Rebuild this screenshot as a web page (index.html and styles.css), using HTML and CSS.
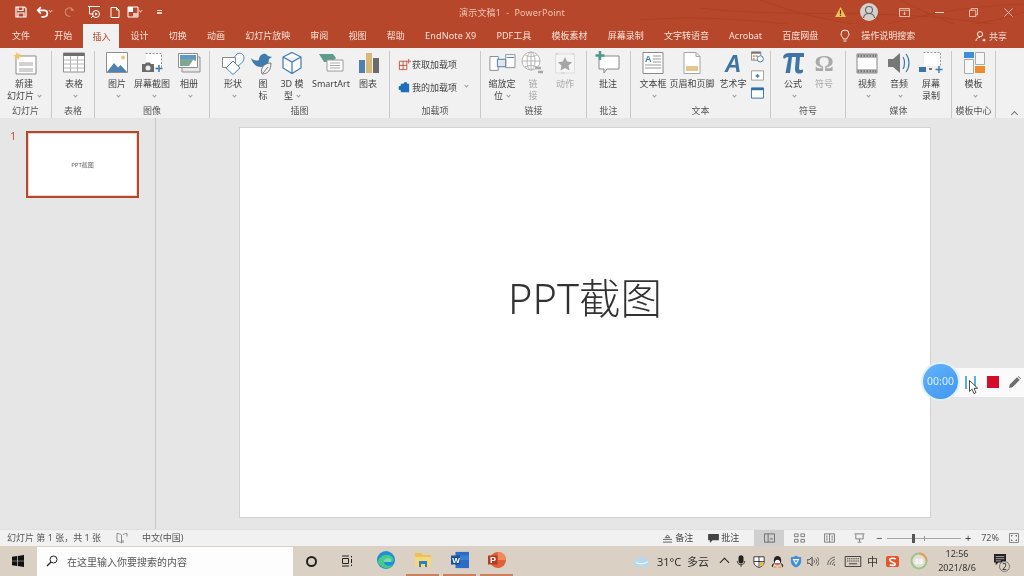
FILE: index.html
```html
<!DOCTYPE html>
<html lang="zh-CN">
<head>
<meta charset="utf-8">
<title>演示文稿1 - PowerPoint</title>
<link rel="stylesheet" href="styles.css">
</head>
<body>
<div class="app">
  <header class="titlebar">
    <svg class="swirl" viewBox="0 0 1024 48" aria-hidden="true"><path d="M700 8C800 20 900 4 1024 30M760 0C840 30 940 40 1024 12M820 48C880 20 960 6 1024 4M640 20C760 10 860 40 1000 48M900 0C940 20 990 40 1024 44"/></svg>
    <div class="qat">
      <svg class="q q-save" viewBox="0 0 12 12"><path d="M1 1h8.500L11 2.500V11H1z M3 1v3.500h5V1 M3 11V7h6v4" fill="none" stroke="#fff" stroke-width="1.200"/></svg>
      <svg class="q q-undo" viewBox="0 0 12 12"><path d="M4.500 1 1.500 4l3 3M2 4h5.500a3 3 0 0 1 0 6H5" fill="none" stroke="#fff" stroke-width="1.500"/></svg>
      <i class="chev light q-c1"></i>
      <svg class="q q-redo" viewBox="0 0 12 12"><path d="M8 1v3h3M10 4A4.500 4.500 0 1 0 7 10.500" fill="none" stroke="#d98c75" stroke-width="1.100"/></svg>
      <svg class="q q-show" viewBox="0 0 14 14"><path d="M1 1.500h12M2.500 2v7h4M6 11 4 13" fill="none" stroke="#fff" stroke-width="1"/><circle cx="9" cy="9" r="3.500" fill="none" stroke="#fff"/><path d="M8 7.500 11 9l-3 1.500z" fill="#fff"/></svg>
      <svg class="q q-new" viewBox="0 0 12 12"><path d="M2 1h5.500L10 3.500V11H2zM7.500 1v2.500H10" fill="none" stroke="#fff"/></svg>
      <svg class="q q-lay" viewBox="0 0 12 12"><path d="M1 1h10v10H1z" fill="none" stroke="#fff"/><path d="M1 1h5v5H1z" fill="#fff"/><path d="M6 7h5v4H6z" fill="#e8c5b8"/></svg>
      <i class="chev light q-c2"></i>
      <span class="q-more"></span>
    </div>
    <div class="doc-title">演示文稿1&nbsp; - &nbsp;PowerPoint</div>
    <div class="win">
      <svg class="w-warn" viewBox="0 0 12 12"><path d="M6 1 11.500 11H.5z" fill="#f2c14e"/><path d="M5.400 4h1.200v4H5.400zM5.400 8.800h1.200V10H5.400z" fill="#5a3a10"/></svg>
      <span class="avatar"><svg viewBox="0 0 18 18"><circle cx="9" cy="7" r="3.500" fill="none" stroke="#666" stroke-width="1.100"/><path d="M3.500 15c.5-3.500 3-4.500 5.500-4.500s5 1 5.500 4.500" fill="none" stroke="#666" stroke-width="1.100"/></svg></span>
      <svg class="w-rib" viewBox="0 0 12 10"><path d="M.5.500h11v9H.5zM.5 2.500h11M6 4v3.500M4.500 6 6 7.500 7.500 6" fill="none" stroke="#f3d9cf" stroke-width=".9"/></svg>
      <span class="w-min"></span>
      <svg class="w-res" viewBox="0 0 10 10"><path d="M.5 2.500h7v7h-7zM2.500 2.500v-2h7v7h-2" fill="none" stroke="#f3d9cf" stroke-width=".9"/></svg>
      <svg class="w-close" viewBox="0 0 10 10"><path d="M.5.500l9 9M9.500.5l-9 9" stroke="#f3d9cf" stroke-width=".9"/></svg>
    </div>
  </header>

  <nav class="tabs">
    <span class="tab first">文件</span><span class="tab">开始</span><span class="tab active">插入</span><span class="tab">设计</span><span class="tab">切换</span><span class="tab">动画</span><span class="tab">幻灯片放映</span><span class="tab">审阅</span><span class="tab">视图</span><span class="tab">帮助</span><span class="tab wide">EndNote X9</span><span class="tab">PDF工具</span><span class="tab">模板素材</span><span class="tab">屏幕录制</span><span class="tab">文字转语音</span><span class="tab">Acrobat</span><span class="tab">百度网盘</span>
    <svg class="bulb" viewBox="0 0 10 14"><path d="M3.300 10C3 8 1 7.500 1 5a4 4 0 0 1 8 0c0 2.500-2 3-2.300 5zM3.500 12h3" fill="none" stroke="#fff" stroke-width=".9"/></svg>
    <span class="tab search">操作说明搜索</span>
    <span class="share"><svg viewBox="0 0 12 12"><circle cx="5.500" cy="4" r="2.800" fill="none" stroke="#fff"/><path d="M1 11.500c.5-3 2-4 4.500-4M8 10.500h3.500M10 9v3" fill="none" stroke="#fff"/></svg>共享</span>
  </nav>

  <section class="ribbon">
    <div class="group g-slide"><div class="row">
      <div class="btn"><svg class="ico" viewBox="0 0 26 24"><path d="M5 5h20v18H5z" fill="#fff" stroke="#8a8a8a"/><path d="M8 11h14v4H8z" fill="#d2d2d2"/><path d="M8 18h14M8 20h14" stroke="#a5a5a5"/><path d="M6 1l1 2.500L9.500 2 8.500 4.500 11 6l-2.800.5L8 9 6 7 3.500 8.500l1-2.800L2 4.500l2.800-.5z" fill="#edc66b"/></svg><span>新建<br>幻灯片<i class="chev"></i></span></div>
    </div><div class="glabel">幻灯片</div></div>

    <div class="group g-table"><div class="row">
      <div class="btn"><svg class="ico" viewBox="0 0 26 24"><path d="M2.500 2h21v19h-21z" fill="#fff" stroke="#8f8f8f"/><path d="M2.500 2h21v3h-21z" fill="#6e6e6e"/><path d="M9.500 5v16M16.500 5v16M3 9h20M3 13h20M3 17h20" stroke="#b5b5b5"/></svg><span>表格<br><i class="chev"></i></span></div>
    </div><div class="glabel">表格</div></div>

    <div class="group g-image"><div class="row">
      <div class="btn"><svg class="ico" viewBox="0 0 26 24"><path d="M2.500 1.500h21v20h-21z" fill="#fff" stroke="#8f8f8f"/><circle cx="19" cy="6.500" r="2" fill="#edc66b"/><path d="M3 21l7-9 4 4.500 2.500-2.500 6.500 7z" fill="#4f81ae"/></svg><span>图片<br><i class="chev"></i></span></div>
      <div class="btn"><svg class="ico" viewBox="0 0 26 24"><path d="M6.500 2.500h16v14" fill="#fff" stroke="#8f8f8f" stroke-dasharray="2 1.500"/><path d="M7 3h15v13H7z" fill="#fff"/><path d="M3 13h3l1-1.500h4l1 1.500h3v8H3z" fill="#6b6b6b"/><circle cx="9" cy="17" r="2.500" fill="#eee"/><path d="M20 14v7M16.500 17.500h7" stroke="#3f7bb0" stroke-width="1.500"/></svg><span>屏幕截图<br><i class="chev"></i></span></div>
      <div class="btn"><svg class="ico" viewBox="0 0 26 24"><path d="M6 6h18v15H6z" fill="#e8e8e8" stroke="#8f8f8f"/><path d="M2.500 2.500h19v14h-19z" fill="#fff" stroke="#8f8f8f"/><path d="M4 4h16v4H4z" fill="#5b9ac8"/><path d="M4 8h16v7H4z" fill="#7fa893"/><path d="M13 15l4-6 3 1v5z" fill="#fff"/></svg><span>相册<br><i class="chev"></i></span></div>
    </div><div class="glabel">图像</div></div>

    <div class="group g-illus"><div class="row">
      <div class="btn"><svg class="ico" viewBox="0 0 26 24"><path d="M13 8 17 3c3-2 7 0 7 4 0 3-2 5-6 8" fill="#fff" stroke="#4f81ae"/><path d="M2.500 6.500h13v10h-13z" fill="#fff" stroke="#8a8a8a"/><path d="M13 10l7 7-7 6.500L6 17z" fill="#fff" stroke="#4f81ae"/></svg><span>形状<br><i class="chev"></i></span></div>
      <div class="btn"><svg class="ico" viewBox="0 0 26 24"><path d="M1 7c3 3 6 3 8 2 0-5 4-7 7-6l2 2 4 1-3 2c0 5-3 8-8 8C6 16 2 12 1 7z" fill="#3f7bb0"/><path d="M12 23c-2-6 2-11 9-11 0 7-3 11-9 11z" fill="#f4f4f4" stroke="#777"/><path d="M13 22l5-6" stroke="#777"/></svg><span>图<br>标</span></div>
      <div class="btn"><svg class="ico" viewBox="0 0 26 24"><path d="M13 1.500l9 4.500v11l-9 5.500L4 17V6zM4 6l9 5 9-5M13 11v11.500" fill="#fbfbfb" stroke="#3f7bb0" stroke-width="1.200"/></svg><span>3D 模<br>型<i class="chev"></i></span></div>
      <div class="btn"><svg class="ico" viewBox="0 0 26 24"><path d="M1 3h14l3 4-3 4H6z" fill="#5d9c8a"/><path d="M9 9h16v11H9z" fill="#fff" stroke="#9a9a9a"/><path d="M12 12h10M12 14.500h10M12 17h10" stroke="#aaa"/></svg><span>SmartArt</span></div>
      <div class="btn"><svg class="ico" viewBox="0 0 26 24"><path d="M4 9h6v13H4z" fill="#4f81ae"/><path d="M11 2h6v20h-6z" fill="#d9b777"/><path d="M18 7h6v15h-6z" fill="#6b6b6b"/></svg><span>图表</span></div>
    </div><div class="glabel">插图</div></div>

    <div class="group g-addin"><div class="stack">
      <div class="hbtn"><svg viewBox="0 0 14 14"><path d="M1.500 3.500h8v9h-8zM5.500 3.500v9M1.500 8h8M11.500 1v5M9 3.500h5" fill="none" stroke="#c5543a"/></svg><span>获取加载项</span></div>
      <div class="hbtn"><svg viewBox="0 0 14 14"><path d="M7 2a2 2 0 0 1 4 0h2v9H4V9a2.500 2.500 0 0 1 0-5V2z" fill="#1f6fb8" transform="translate(-1 1)"/></svg><span>我的加载项</span><i class="chev mine"></i></div>
    </div><div class="glabel">加载项</div></div>

    <div class="group g-link"><div class="row">
      <div class="btn"><svg class="ico" viewBox="0 0 28 24"><path d="M1 5h9v15H1zM18 3h10v14H18z" fill="#fff" stroke="#8a8a8a"/><path d="M9 8h9v8H9z" fill="#e5e5e5" stroke="#3f7bb0"/><path d="M19 6h8" stroke="#3f7bb0"/></svg><span>缩放定<br>位<i class="chev"></i></span></div>
      <div class="btn dim"><svg class="ico" viewBox="0 0 26 24"><circle cx="11" cy="10" r="9" fill="#fff" stroke="#b5b5b5"/><path d="M2 10h18M11 1v18M5 4c4 2 8 2 12 0M5 16c4-2 8-2 12 0" fill="none" stroke="#b5b5b5"/><ellipse cx="11" cy="10" rx="4" ry="9" fill="none" stroke="#b5b5b5"/><path d="M15 17h6M18 21h5" stroke="#a8a8a8" stroke-width="2.500"/></svg><span>链<br>接</span></div>
      <div class="btn dim"><svg class="ico" viewBox="0 0 26 24"><path d="M3.500 3h19v19h-19z" fill="#f5f5f5" stroke="#bbb" stroke-dasharray="3 13"/><path d="M3.500 3h19v19h-19z" fill="none" stroke="#ddd"/><path d="M13 6l2.200 4.600 5 .6-3.700 3.400 1 5-4.500-2.500-4.500 2.500 1-5-3.700-3.400 5-.6z" fill="#a5a5a5"/></svg><span>动作</span></div>
    </div><div class="glabel">链接</div></div>

    <div class="group g-comment"><div class="row">
      <div class="btn"><svg class="ico" viewBox="0 0 26 24"><path d="M4 5h20v13H12l-3 4v-4H4z" fill="#fff" stroke="#8a8a8a"/><path d="M5 0v9M.5 4.500h9" stroke="#4c9a86" stroke-width="2.500"/></svg><span>批注</span></div>
    </div><div class="glabel">批注</div></div>

    <div class="group g-text"><div class="row">
      <div class="btn"><svg class="ico" viewBox="0 0 26 24"><path d="M3 1.500h20v21H3z" fill="#fff" stroke="#8a8a8a"/><text x="5" y="11" class="ico-a">A</text><path d="M13 5h8M13 8h8M13 11h8M5 14h16M5 17h16" stroke="#999"/></svg><span>文本框<br><i class="chev"></i></span></div>
      <div class="btn"><svg class="ico" viewBox="0 0 26 24"><path d="M5 1.500h12l4 4v17H5z" fill="#fff" stroke="#a5a5a5"/><path d="M7 15h12v5H7z" fill="#e3c78c"/><path d="M17 1.500v4h4" fill="none" stroke="#a5a5a5"/></svg><span>页眉和页脚</span></div>
      <div class="btn art"><svg class="ico" viewBox="0 0 26 24"><text x="13" y="21" class="ico-art">A</text></svg><span>艺术字<br><i class="chev"></i></span></div>
      <div class="mini">
        <svg viewBox="0 0 14 12"><path d="M.5.500h10v9H.5z" fill="#fff" stroke="#888"/><path d="M.5.500h10v2H.5z" fill="#777"/><path d="M2 4h2v2H2zM5 4h2v2H5zM2 7h2v2H2z" fill="#d08a4a"/><circle cx="10" cy="8" r="3.300" fill="#fff" stroke="#3f7bb0"/></svg>
        <svg viewBox="0 0 14 12"><path d="M.5 1.500h13v10H.5z" fill="#fff" stroke="#999"/><path d="M5 7h4M7 5v4" stroke="#3f7bb0" stroke-width="1.500"/></svg>
        <svg viewBox="0 0 14 12"><path d="M.5.500h13v11H.5z" fill="#fff" stroke="#2f6ea5"/><path d="M.5.500h13v2.500H.5z" fill="#2f6ea5"/></svg>
      </div>
    </div><div class="glabel">文本</div></div>

    <div class="group g-symbol"><div class="row">
      <div class="btn"><svg class="ico" viewBox="0 0 26 24"><path d="M3 6c1-3 3-4 6-4h15v4h-4l-1 11c0 2 1 2 3 2l1-1v3c-1 1-2 1.500-4 1.500-3 0-4-2-4-5l1-11.500h-4L10 22H5.500L8.500 6C6 6 5 7 4 8z" fill="#3f74a8"/></svg><span>公式<br><i class="chev"></i></span></div>
      <div class="btn dim"><svg class="ico" viewBox="0 0 26 24"><text x="13" y="20" class="ico-om">Ω</text></svg><span>符号</span></div>
    </div><div class="glabel">符号</div></div>

    <div class="group g-media"><div class="row">
      <div class="btn"><svg class="ico" viewBox="0 0 26 24"><path d="M3 3h20v19H3z" fill="#fff" stroke="#888"/><path d="M3.500 3.500h19v3h-19zM3.500 18.500h19v3h-19z" fill="#777"/><path d="M5 5h16M5 20h16" stroke="#eee" stroke-dasharray="1.500 1.500"/></svg><span>视频<br><i class="chev"></i></span></div>
      <div class="btn"><svg class="ico" viewBox="0 0 26 24"><path d="M2 8h5l7-6v20l-7-6H2z" fill="#777"/><path d="M17 6c2 3 2 9 0 12M20 3c4 5 4 13 0 18" fill="none" stroke="#3f7bb0" stroke-width="1.200"/></svg><span>音频<br><i class="chev"></i></span></div>
      <div class="btn"><svg class="ico" viewBox="0 0 26 24"><path d="M5.500 1.500h17v13" fill="#fff" stroke="#999" stroke-dasharray="2 1.500"/><path d="M6 2h16v13H6z" fill="#fff"/><path d="M1 16h7v5H1z" fill="#3f74a8"/><path d="M11 18h3" stroke="#777" stroke-width="2"/><path d="M21 15v7M17.500 18.500h7" stroke="#3f7bb0" stroke-width="1.500"/></svg><span>屏幕<br>录制</span></div>
    </div><div class="glabel">媒体</div></div>

    <div class="group g-tpl"><div class="row">
      <div class="btn"><svg class="ico" viewBox="0 0 26 24"><path d="M3 1h10v6H3z" fill="#3c8fd8"/><path d="M14.500 1.500h9v12h-9zM3.500 8.500h9v14h-9z" fill="#f7f7f7" stroke="#aaa"/><path d="M14 15h10v7H14z" fill="#ec8c2e"/></svg><span>模板<br><i class="chev"></i></span></div>
    </div><div class="glabel">模板中心</div></div>

    <i class="collapse"></i>
  </section>

  <main class="work">
    <aside class="pane">
      <span class="num">1</span>
      <div class="thumb"><span>PPT截图</span></div>
    </aside>
    <div class="stage">
      <div class="slide"><h1>PPT截图</h1></div>
    </div>
  </main>

  <footer class="status">
    <span class="s-count">幻灯片 第 1 张，共 1 张</span>
    <svg class="s-book" viewBox="0 0 12 12"><path d="M1 1.500c2 0 3.500.5 4.500 1.500v8C4.500 10 3 9.500 1 9.500zM7 3c.5-1 2-1.500 4-1.500v3M7 11V8" fill="none" stroke="#888"/></svg>
    <span class="s-lang">中文(中国)</span>
    <div class="s-right">
      <span class="s-note"><svg viewBox="0 0 10 10"><path d="M5 1 2.500 4h5zM0 6h10M0 9h10" fill="none" stroke="#444" stroke-width=".9"/></svg>备注</span>
      <span class="s-cmt"><svg viewBox="0 0 12 10"><path d="M0 0h12v7H5L2 10V7H0z" fill="#444"/></svg>批注</span>
      <span class="view on"><svg viewBox="0 0 12 10"><path d="M.5.500h11v9H.5zM4.500.5v9M6.500 6h3" fill="none" stroke="#666"/></svg></span>
      <span class="view"><svg viewBox="0 0 12 10"><path d="M.5.500h4v3h-4zM7.500.5h4v3h-4zM.5 6.500h4v3h-4zM7.500 6.500h4v3h-4z" fill="none" stroke="#777"/></svg></span>
      <span class="view"><svg viewBox="0 0 12 10"><path d="M.5.500h11v9H.5zM6 .5v9M2 3h2M2 5h2M2 7h2M8 3h2M8 5h2M8 7h2" fill="none" stroke="#777"/></svg></span>
      <span class="view"><svg viewBox="0 0 12 10"><path d="M.5.500h11M2 1v5h8V1M6 6v3M4 9.500h4" fill="none" stroke="#777"/></svg></span>
      <div class="zoom"><span class="pm">−</span><div class="track"><i class="mid"></i><i class="knob"></i></div><span class="pm">+</span><span class="pct">72%</span></div>
      <svg class="s-fit" viewBox="0 0 10 10"><path d="M.5.500h9v9h-9z" fill="none" stroke="#888"/><path d="M2 2l2 0-2 2zM8 2v2L6 2zM2 8V6l2 2zM8 8H6l2-2z" fill="#666"/></svg>
    </div>
  </footer>

  <div class="taskbar">
    <svg class="t-start" viewBox="0 0 12 12"><path d="M0 1.700 5 1v4.700H0zM5.700.9 12 0v5.700H5.700zM0 6.300h5V11l-5-.7zM5.700 6.300H12V12l-6.300-.9z" fill="#111"/></svg>
    <div class="t-search">
      <svg viewBox="0 0 12 12"><circle cx="7.500" cy="4.500" r="3.500" fill="none" stroke="#222"/><path d="M5 7 1 11" stroke="#222" stroke-width="1.200"/></svg>
      <span>在这里输入你要搜索的内容</span>
    </div>
    <span class="t-cortana"></span>
    <svg class="t-tv" viewBox="0 0 12 12"><path d="M1 1h7M1 11h7M1.500 3.500h6v5h-6zM10.500 1v1.500M10.500 4v4M10.500 9.500V11" fill="none" stroke="#222"/></svg>
    <div class="t-app a-edge"><svg viewBox="0 0 18 18"><circle cx="9" cy="9" r="9" fill="#1d8fd6"/><path d="M1 11C2 5 9 2 14 5c3 2 3 6 1 6H7c0 3 4 5 9 3-3 4-9 4-12 1-2-1-3-3-3-4z" fill="#47c98c"/><path d="M7 11c0-3 3-5 7-3v3z" fill="#fff" opacity=".3"/></svg></div>
    <div class="t-app a-folder open"><svg viewBox="0 0 18 18"><path d="M1 2h6l2 2h8v12H1z" fill="#eec250"/><path d="M1 6h16v10H1z" fill="#f5d77e"/><path d="M5 16v-6h8v6h-2v-3H7v3z" fill="#2f7fbd"/></svg></div>
    <div class="t-app a-word open"><svg viewBox="0 0 20 18"><path d="M5 0h15v18H5z" fill="#2b6cc4"/><path d="M5 4h15v5H5z" fill="#3f8fe0" opacity=".6"/><path d="M0 4h10v10H0z" fill="#1c4f9c"/><text x="1.500" y="12" class="ico-w">W</text></svg></div>
    <div class="t-app a-ppt open"><svg viewBox="0 0 18 18"><circle cx="10" cy="9" r="8" fill="#e0603a"/><path d="M10 1a8 8 0 0 1 8 8h-8z" fill="#f08a5a"/><path d="M0 4.500h9.500v9H0z" fill="#b83c1f"/><text x="2" y="12" class="ico-w">P</text></svg></div>
    <div class="tray">
      <svg class="tr-cloud" viewBox="0 0 18 14"><path d="M4 13a3.500 3.500 0 0 1-.5-7C4.500 2 9 0 12 3c3 0 5 3 5 5 0 3-2 5-5 5z" fill="#b8d8ec"/><path d="M3 8c3 2 9 2 13-1" fill="none" stroke="#fff"/></svg>
      <span class="tr-weather">31°C 多云</span>
      <i class="tr-up"></i>
      <svg class="tr i1" viewBox="0 0 12 14"><rect x="3" y="0" width="6" height="10" rx="3" fill="#222"/><path d="M1.500 7c0 6 9 6 9 0M6 11v3" fill="none" stroke="#222"/></svg>
      <svg class="tr i2" viewBox="0 0 14 14"><path d="M1 1.500h12V8c0 3-3 5-6 6-3-1-6-3-6-6z" fill="#fff" stroke="#222"/><path d="M7 1.500V13M1 7h12" stroke="#222"/><path d="M8 8l3-1 2 5H8z" fill="#e9b93f"/></svg>
      <svg class="tr i3" viewBox="0 0 14 14"><ellipse cx="7" cy="6" rx="4" ry="5" fill="#222"/><ellipse cx="7" cy="8" rx="2.800" ry="3" fill="#fff"/><path d="M3 9c-2 2-2 3-1 4M11 9c2 2 2 3 1 4" stroke="#222"/><path d="M4 9h6l-1 1.500H5z" fill="#d9342b"/><path d="M3 13h3M8 13h3" stroke="#e8a02c" stroke-width="1.500"/></svg>
      <svg class="tr i4" viewBox="0 0 14 14"><path d="M1 2c3 0 4-1 6-2 2 1 3 2 6 2v5c0 3-3 6-6 7-3-1-6-4-6-7z" fill="#3f8fdc"/><path d="M3 4h8L7 11z" fill="#fff"/><path d="M5 5.500h4L7 8.500z" fill="#3f8fdc"/></svg>
      <svg class="tr i5" viewBox="0 0 14 12"><path d="M0 4h2.500L6 1v10L2.500 8H0z" fill="none" stroke="#333"/><path d="M8 4c1 1 1 3 0 4M10 2.500c2 2 2 5 0 7M12 1c2.500 3 2.500 7 0 10" fill="none" stroke="#333" stroke-width=".8"/></svg>
      <svg class="tr i6" viewBox="0 0 14 12"><path d="M1 11c0-5 3-9 9-10M4 11c0-3 2-6 6-7M7 11c0-2 1-3 3-4" fill="none" stroke="#444"/><path d="M9 11h1" stroke="#222" stroke-width="2"/></svg>
      <svg class="tr i7" viewBox="0 0 18 12"><path d="M.5.500h17v11H.5z" fill="none" stroke="#333"/><path d="M2.500 3h13M2.500 5.500h13" stroke="#333" stroke-dasharray="1.200 .8"/><path d="M4.500 8.500h9" stroke="#333"/></svg>
      <span class="tr-ime">中</span>
      <svg class="tr i8" viewBox="0 0 14 14"><path d="M2 1h10c1 0 2 1 2 2v8c0 1-1 2-2 2H2c-1 0-2-1-2-2V3c0-1 1-2 2-2z" fill="#e8542a"/><path d="M10.500 4.500C9 3 4 3 4 5.500S10 7.500 10 10c0 1.500-4 1.500-6 .5" fill="none" stroke="#fff" stroke-width="1.800"/></svg>
      <svg class="tr i9" viewBox="0 0 18 18"><circle cx="9" cy="9" r="7.500" fill="#e3dfd8" stroke="#9fc48a" stroke-width="2"/><path d="M9 1.500a7.500 7.500 0 0 1 7.500 7.500" fill="none" stroke="#dda35a" stroke-width="2"/><text x="9" y="11.500" class="ico-88">88</text></svg>
      <div class="clock"><span>12:56</span><span>2021/8/6</span></div>
      <div class="notify"><svg viewBox="0 0 14 14"><path d="M0 0h14v10H5l-3 3v-3H0z" fill="#222"/><path d="M2 3h10M2 5.500h10M2 8h6" stroke="#ddd" stroke-width=".8"/></svg><b>2</b></div>
    </div>
  </div>

  <aside class="recorder">
    <div class="timer">00:00</div>
    <span class="pause"></span>
    <span class="stop"></span>
    <svg class="pen" viewBox="0 0 12 12"><path d="M0 12l.8-3.500L8 1.300l2.700 2.700L3.500 11.200zM8.800.5 9.500 0 12 2.500l-.5.700z" fill="#6e6e6e"/></svg>
    <svg class="cursor" viewBox="0 0 10 15"><path d="M.5.500v11l2.600-2.300 1.800 4.300 2-.8-1.800-4.300 3.500-.2z" fill="#fff" stroke="#222" stroke-width=".8"/></svg>
  </aside>
</div>
</body>
</html>
```
FILE: styles.css
```css
* { box-sizing: border-box; margin: 0; padding: 0; }
html, body { width: 1024px; height: 576px; overflow: hidden; }
body { font-family: "Noto Sans", "Noto Sans CJK SC", sans-serif; font-size: 9px; color: #444; }
.app { position: relative; width: 1024px; height: 576px; display: flex; flex-direction: column; overflow: hidden; background: #e6e6e6; filter: blur(.3px); }
i { font-style: normal; }

.chev { display: inline-block; width: 3px; height: 3px; border-right: 1px solid #999; border-bottom: 1px solid #999; transform: rotate(45deg); margin-left: 4px; position: relative; top: -2px; }
.chev.light { border-color: #e6b6a6; margin-left: 0; }

/* title bar */
.titlebar { position: relative; height: 24px; background: #b7472a; display: flex; align-items: center; flex: none; }
.swirl { position: absolute; right: 0; top: 0; width: 1024px; height: 48px; fill: none; stroke: #a8401f; stroke-width: .8; pointer-events: none; }
.qat { width: 459px; flex: none; display: flex; align-items: center; padding-left: 15px; height: 24px; position: relative; }
.q { display: block; flex: none; }
.q-save { width: 12px; height: 12px; }
.q-undo { width: 13px; height: 13px; margin-left: 9px; }
.q-c1 { margin-left: 8px; }
.q-redo { width: 11px; height: 12px; margin-left: 12px; }
.q-show { width: 14px; height: 14px; margin-left: 12px; }
.q-new { width: 12px; height: 13px; margin-left: 8px; }
.q-lay { width: 12px; height: 12px; margin-left: 6px; }
.q-c2 { margin-left: 8px; }
.q-more { width: 5px; height: 4px; margin-left: 15px; border-top: 1px solid #f0d2c6; border-bottom: 2px solid #f0d2c6; }
.doc-title { color: #f0c4b4; font-size: 9px; position: relative; white-space: nowrap; letter-spacing: .2px; }
.win { margin-left: auto; display: flex; align-items: center; position: relative; padding-right: 11px; }
.w-warn { width: 13px; height: 12px; }
.avatar { width: 18px; height: 18px; border-radius: 50%; background: #d4d0ce; margin-left: 13px; display: block; }
.avatar svg { display: block; width: 18px; height: 18px; }
.w-rib { width: 11px; height: 9px; margin-left: 21px; }
.w-min { width: 9px; height: 1px; background: #f3d9cf; margin-left: 25px; }
.w-res { width: 9px; height: 9px; margin-left: 25px; }
.w-close { width: 9px; height: 9px; margin-left: 26px; }

/* tabs */
.tabs { position: relative; height: 24px; background: #b7472a; display: flex; align-items: stretch; flex: none; padding-left: 2px; }
.tab { color: #f7e3db; padding: 0 10.100px; line-height: 24px; white-space: nowrap; flex: none; }
.tab.first { margin-right: 4px; }
.tab.wide { letter-spacing: .2px; }
.tab.active { background: #f1f1f1; color: #b7472a; height: 24px; padding: 1px 9px 0; margin: 0 1px 0 1px; }
.bulb { width: 10px; height: 14px; align-self: center; margin-left: 12px; }
.tab.search { padding: 0 0 0 11px; }
.share { margin-left: auto; margin-right: 17px; display: flex; align-items: center; gap: 3px; color: #f7e3db; }
.share svg { width: 11px; height: 12px; }

/* ribbon */
.ribbon { position: relative; height: 70px; flex: none; background: #f1f1f1; display: flex; }
.group { flex: none; height: 67px; margin-top: 3px; border-right: 1px solid #c8c8c8; display: flex; flex-direction: column; }
.row { height: 54px; display: grid; align-items: start; }
.glabel { text-align: center; line-height: 12px; height: 12px; color: #555; white-space: nowrap; }
.btn { display: flex; flex-direction: column; align-items: center; min-width: 0; text-align: center; line-height: 12px; white-space: nowrap; color: #444; }
.btn .ico { width: 26px; height: 24px; display: block; margin-bottom: 3px; flex: none; overflow: visible; }
.btn.dim { color: #a8a8a8; }
.btn.art { padding-left: 6px; }

.g-slide { width: 52px; } .g-slide .row { grid-template-columns: 48px; }
.g-table { width: 43px; } .g-table .row { grid-template-columns: 42px; padding-left: 1px; }
.g-image { width: 115px; } .g-image .row { grid-template-columns: 34px 36px 38px; padding-left: 5px; }
.g-illus { width: 180px; } .g-illus .row { grid-template-columns: 36px 24px 34px 44px 30px; padding-left: 5px; }
.g-addin { width: 91px; }
.g-link { width: 106px; } .g-link .row { grid-template-columns: 36px 26px 38px; padding-left: 3px; }
.g-comment { width: 44px; } .g-comment .row { grid-template-columns: 42px; }
.g-text { width: 140px; } .g-text .row { grid-template-columns: 42px 36px 40px 14px; padding-left: 1px; }
.g-symbol { width: 75px; } .g-symbol .row { grid-template-columns: 36px 26px; padding-left: 4px; }
.g-media { width: 106px; } .g-media .row { grid-template-columns: 32px 32px 32px; padding-left: 5px; }
.g-tpl { width: 44px; } .g-tpl .row { grid-template-columns: 43px; }

.stack { height: 54px; padding: 7px 0 0 8px; display: flex; flex-direction: column; gap: 11px; }
.hbtn { display: flex; align-items: center; height: 12px; gap: 1px; white-space: nowrap; }
.hbtn svg { width: 13px; height: 13px; flex: none; }
.chev.mine { margin-left: 7px; }
.mini { display: flex; flex-direction: column; gap: 6px; padding-left: 1px; }
.mini svg { width: 13px; height: 12px; display: block; }
.collapse { position: absolute; right: 7px; top: 64px; width: 5px; height: 5px; border-left: 1px solid #777; border-top: 1px solid #777; transform: rotate(45deg); }

.ico-a { font: 700 9px "Liberation Sans", sans-serif; fill: #3f7bb0; }
.ico-art { font: italic 700 23px "Liberation Sans", sans-serif; fill: #3f74a8; text-anchor: middle; }
.ico-om { font: 700 24px "Liberation Serif", serif; fill: #a9a9a9; text-anchor: middle; }
.ico-w { font: 700 9px "Liberation Sans", sans-serif; fill: #fff; }
.ico-88 { font: 700 7px "Liberation Sans", sans-serif; fill: #fff; text-anchor: middle; }

/* work area */
.work { flex: 1; min-height: 0; display: flex; background: #e6e6e6; }
.pane { position: relative; width: 156px; flex: none; border-right: 1px solid #c6c6c6; padding: 13px 0 0 26px; }
.num { position: absolute; left: 10px; top: 10px; font-size: 11px; color: #c0583c; line-height: 16px; }
.thumb { width: 113px; height: 67px; background: #fff; border: 2px solid #b7472a; outline: 1px solid #f0d8d0; outline-offset: -3px; display: flex; align-items: center; justify-content: center; }
.thumb span { font-size: 6px; color: #666; }
.stage { flex: 1; padding: 10px 0 0 84px; }
.slide { width: 690px; height: 389px; background: #fff; box-shadow: 0 0 0 1px #d2d2d2; display: flex; justify-content: center; }
.slide h1 { font-weight: 300; font-size: 41.500px; color: #333; line-height: 56px; margin-top: 142px; height: 56px; font-family: "Noto Sans", "Noto Sans CJK SC", sans-serif; }

/* status */
.status { height: 17px; flex: none; background: #f1f1f1; border-top: 1px solid #e0e0e0; display: flex; align-items: center; padding-left: 7px; line-height: 16px; color: #555; }
.s-count { width: 109px; white-space: nowrap; }
.s-book { width: 12px; height: 12px; }
.s-lang { margin-left: 14px; }
.s-right { margin-left: auto; display: flex; align-items: center; height: 16px; }
.s-note, .s-cmt { display: flex; align-items: center; gap: 2px; color: #444; white-space: nowrap; }
.s-note svg { width: 9px; height: 9px; margin-right: 1px; }
.s-cmt { margin-left: 15px; }
.s-cmt svg { width: 11px; height: 9px; }
.view { width: 30px; height: 16px; display: flex; align-items: center; justify-content: center; }
.view svg { width: 11px; height: 10px; }
.view.on { background: #cfcfcf; margin-left: 15px; }
.zoom { display: flex; align-items: center; margin-left: 1px; }
.pm { width: 8px; text-align: center; font-size: 11px; color: #444; }
.track { position: relative; width: 74px; height: 1px; background: #a5a5a5; margin: 0 3.500px; }
.track .knob { position: absolute; left: 25px; top: -4px; width: 3px; height: 9px; background: #555; }
.track .mid { position: absolute; left: 37px; top: -2px; width: 1px; height: 5px; background: #999; }
.pct { margin-left: 9px; color: #555; }
.s-fit { width: 10px; height: 10px; margin: 0 5px 0 10px; }

/* taskbar */
.taskbar { height: 30px; flex: none; background: #dbd0c4; display: flex; align-items: center; padding-left: 12px; color: #333; }
.t-start { width: 12px; height: 12px; flex: none; }
.t-search { width: 256px; height: 29px; background: #fdfdfd; margin-left: 13px; display: flex; align-items: center; padding-left: 9px; font-size: 10px; color: #555; gap: 9px; flex: none; }
.t-search svg { width: 12px; height: 12px; }
.t-cortana { width: 11px; height: 11px; border: 2px solid #222; border-radius: 50%; margin-left: 13px; flex: none; }
.t-tv { width: 12px; height: 12px; margin-left: 24px; flex: none; }
.t-app { width: 37px; height: 30px; display: flex; align-items: center; justify-content: center; flex: none; border-bottom: 2px solid transparent; }
.t-app svg { width: 18px; height: 18px; }
.t-app.open { border-image: linear-gradient(90deg, transparent 9%, #c9805f 9%, #c9805f 91%, transparent 91%) 1; }
.a-edge { margin-left: 14px; }
.tray { margin-left: auto; display: flex; align-items: center; position: relative; height: 30px; }
.tr-cloud { width: 17px; height: 13px; margin-right: 7px; }
.tr-weather { font-size: 11px; width: 64px; white-space: nowrap; color: #333; word-spacing: 3px; }
.tr-up { width: 7px; height: 7px; border-left: 1px solid #222; border-top: 1px solid #222; transform: rotate(45deg); margin: 3px 4px 0 0; }
.tr { flex: none; display: block; }
.i1 { width: 10px; height: 14px; margin-left: 4px; }
.i2 { width: 12px; height: 13px; margin-left: 7px; }
.i3 { width: 13px; height: 13px; margin-left: 6px; }
.i4 { width: 12px; height: 13px; margin-left: 6px; }
.i5 { width: 12px; height: 11px; margin-left: 5px; }
.i6 { width: 11px; height: 10px; margin-left: 8px; }
.i7 { width: 18px; height: 11px; margin-left: 6px; }
.tr-ime { font-size: 11px; margin-left: 5px; width: 12px; color: #333; }
.i8 { width: 13px; height: 13px; margin-left: 7px; }
.i9 { width: 18px; height: 18px; margin-left: 11px; }
.clock { width: 48px; margin-left: 5px; display: flex; flex-direction: column; align-items: center; line-height: 14px; font-size: 9px; color: #333; white-space: nowrap; }
.notify { position: relative; width: 22px; height: 18px; margin: 0 13px 0 8px; }
.notify svg { width: 12px; height: 12px; position: absolute; left: 5px; top: 2px; }
.notify b { position: absolute; right: 1px; bottom: -2px; width: 11px; height: 11px; border-radius: 50%; background: #dbd0c4; border: 1px solid #777; font-size: 8px; font-weight: 400; line-height: 9px; text-align: center; color: #222; }

/* recorder overlay */
.recorder { position: absolute; left: 923px; top: 364px; width: 101px; height: 36px; }
.recorder::before { content: ""; position: absolute; left: 20px; right: 0; top: 4px; height: 29px; background: #fafafa; }
.timer { position: absolute; left: 0; top: 0; width: 35px; height: 35px; border-radius: 50%; background: linear-gradient(145deg, #64b4fa, #3f95f2); box-shadow: 0 0 0 2px #dff0fd; color: #dcefff; font-size: 10.500px; line-height: 35px; text-align: center; }
.pause { position: absolute; left: 42px; top: 12px; width: 11px; height: 13px; border-left: 2px solid #5ab0d8; border-right: 2px solid #5ab0d8; }
.stop { position: absolute; left: 64px; top: 12px; width: 12px; height: 12px; background: #d40c2c; }
.pen { position: absolute; left: 86px; top: 12px; width: 12px; height: 12px; }
.cursor { position: absolute; left: 46px; top: 16px; width: 10px; height: 15px; }
```
